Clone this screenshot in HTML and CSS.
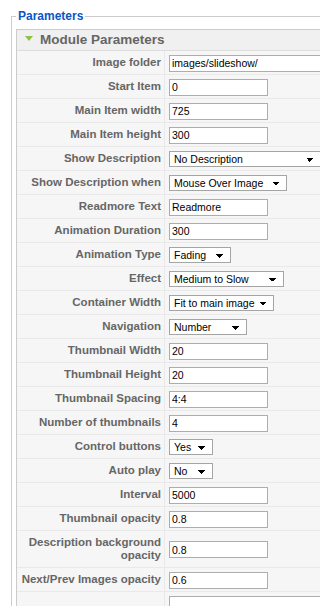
FILE: index.html
```html
<!DOCTYPE html>
<html lang="en">
  <head>
    <meta charset="UTF-8" />
    <title>Module Parameters</title>
    <link rel="stylesheet" href="styles.css">
  </head>
  <body>
    <fieldset class="params">
      <legend>Parameters</legend>

      <!-- Module parameters slider -->
      <div class="pane">
        <h3 class="pane-title"><span class="toggle"></span>Module Parameters</h3>
        <table class="paramlist">
          <tr>
            <td class="key">Image folder</td>
            <td class="value"><input type="text" class="text wide" value="images/slideshow/" /></td>
          </tr>
          <tr>
            <td class="key">Start Item</td>
            <td class="value"><input type="text" class="text" value="0" /></td>
          </tr>
          <tr>
            <td class="key">Main Item width</td>
            <td class="value"><input type="text" class="text" value="725" /></td>
          </tr>
          <tr>
            <td class="key">Main Item height</td>
            <td class="value"><input type="text" class="text" value="300" /></td>
          </tr>
          <tr>
            <td class="key">Show Description</td>
            <td class="value">
              <select class="sel-desc"><option>No Description</option></select>
            </td>
          </tr>
          <tr>
            <td class="key">Show Description when</td>
            <td class="value">
              <select class="sel-when"><option>Mouse Over Image</option></select>
            </td>
          </tr>
          <tr>
            <td class="key">Readmore Text</td>
            <td class="value"><input type="text" class="text" value="Readmore" /></td>
          </tr>
          <tr>
            <td class="key">Animation Duration</td>
            <td class="value"><input type="text" class="text" value="300" /></td>
          </tr>
          <tr>
            <td class="key">Animation Type</td>
            <td class="value">
              <select class="sel-anim"><option>Fading</option></select>
            </td>
          </tr>
          <tr>
            <td class="key">Effect</td>
            <td class="value">
              <select class="sel-effect"><option>Medium to Slow</option></select>
            </td>
          </tr>
          <tr>
            <td class="key">Container Width</td>
            <td class="value">
              <select class="sel-container"><option>Fit to main image</option></select>
            </td>
          </tr>
          <tr>
            <td class="key">Navigation</td>
            <td class="value">
              <select class="sel-nav"><option>Number</option></select>
            </td>
          </tr>
          <tr>
            <td class="key">Thumbnail Width</td>
            <td class="value"><input type="text" class="text" value="20" /></td>
          </tr>
          <tr>
            <td class="key">Thumbnail Height</td>
            <td class="value"><input type="text" class="text" value="20" /></td>
          </tr>
          <tr>
            <td class="key">Thumbnail Spacing</td>
            <td class="value"><input type="text" class="text" value="4:4" /></td>
          </tr>
          <tr>
            <td class="key">Number of thumbnails</td>
            <td class="value"><input type="text" class="text" value="4" /></td>
          </tr>
          <tr>
            <td class="key">Control buttons</td>
            <td class="value">
              <select class="sel-yesno"><option>Yes</option></select>
            </td>
          </tr>
          <tr>
            <td class="key">Auto play</td>
            <td class="value">
              <select class="sel-yesno"><option>No</option></select>
            </td>
          </tr>
          <tr>
            <td class="key">Interval</td>
            <td class="value"><input type="text" class="text" value="5000" /></td>
          </tr>
          <tr>
            <td class="key">Thumbnail opacity</td>
            <td class="value"><input type="text" class="text" value="0.8" /></td>
          </tr>
          <tr class="tall">
            <td class="key">Description background opacity</td>
            <td class="value"><input type="text" class="text" value="0.8" /></td>
          </tr>
          <tr>
            <td class="key">Next/Prev Images opacity</td>
            <td class="value"><input type="text" class="text" value="0.6" /></td>
          </tr>
          <tr class="area-row">
            <td class="key"></td>
            <td class="value"><textarea class="area" rows="4"></textarea></td>
          </tr>
        </table>
      </div>
    </fieldset>
  </body>
</html>
```

FILE: styles.css
```css
html,
body {
  margin: 0;
  overflow: hidden;
}
body {
  font-family: "Liberation Sans", Arial, sans-serif;
  background: #ffffff;
}
.params {
  margin: 9px 0 0 11px;
  padding: 6px 4px 10px 4px;
  border: 1px solid #cccccc;
  width: 380px;
}
.params legend {
  color: #0b55c4;
  font-size: 12px;
  font-weight: bold;
  line-height: 14px;
  padding: 0 2px;
}
.pane {
  border: 1px solid #cccccc;
  background: #f6f6f6;
}
.pane-title {
  margin: 0;
  height: 20px;
  line-height: 20px;
  padding-left: 8px;
  font-size: 13.5px;
  font-weight: bold;
  color: #666666;
  background: #f0f0f0;
  border-bottom: 1px solid #dddddd;
}
.toggle {
  display: inline-block;
  vertical-align: middle;
  margin: -3px 7px 0 0;
  border-left: 4px solid transparent;
  border-right: 4px solid transparent;
  border-top: 5px solid #8bc34a;
}
.paramlist {
  border-collapse: separate;
  border-spacing: 0;
  width: 100%;
}
.paramlist td {
  height: 23px;
  padding: 0;
  border-bottom: 1px solid #e9e9e9;
  vertical-align: middle;
}
.paramlist .key {
  width: 144px;
  padding-right: 3px;
  text-align: right;
  border-right: 1px solid #e9e9e9;
  font-size: 11.5px;
  line-height: 13px;
  font-weight: bold;
  color: #666666;
}
.paramlist .value {
  padding-left: 4px;
}
.paramlist .tall td {
  height: 36px;
}
.paramlist .area-row td {
  border-bottom: none;
  vertical-align: top;
  padding-top: 4px;
}
.text,
.area,
select {
  box-sizing: border-box;
  margin: 0;
  font-family: "Liberation Sans", Arial, sans-serif;
  font-size: 10.5px;
  color: #000000;
  background-color: #ffffff;
  vertical-align: middle;
}
.text {
  width: 99px;
  height: 17px;
  padding: 0 2px;
  border: 1px solid #adadad;
}
.text.wide {
  width: 200px;
}
.area {
  width: 200px;
  height: 40px;
  border: 1px solid #adadad;
  resize: none;
}
select {
  appearance: none;
  -webkit-appearance: none;
  height: 16px;
  padding: 0 0 0 4px;
  border: 1px solid #a5a5a5;
  border-radius: 0;
  background-image: linear-gradient(45deg, transparent 50%, #000000 50%),
    linear-gradient(135deg, #000000 50%, transparent 50%);
  background-position: right 10px top 6px, right 6px top 6px;
  background-size: 4px 4px;
  background-repeat: no-repeat;
}
.sel-desc {
  width: 152px;
}
.sel-when {
  width: 118px;
}
.sel-anim {
  width: 62px;
}
.sel-effect {
  width: 115px;
}
.sel-container {
  width: 105px;
}
.sel-nav {
  width: 78px;
}
.sel-yesno {
  width: 44px;
}
```
